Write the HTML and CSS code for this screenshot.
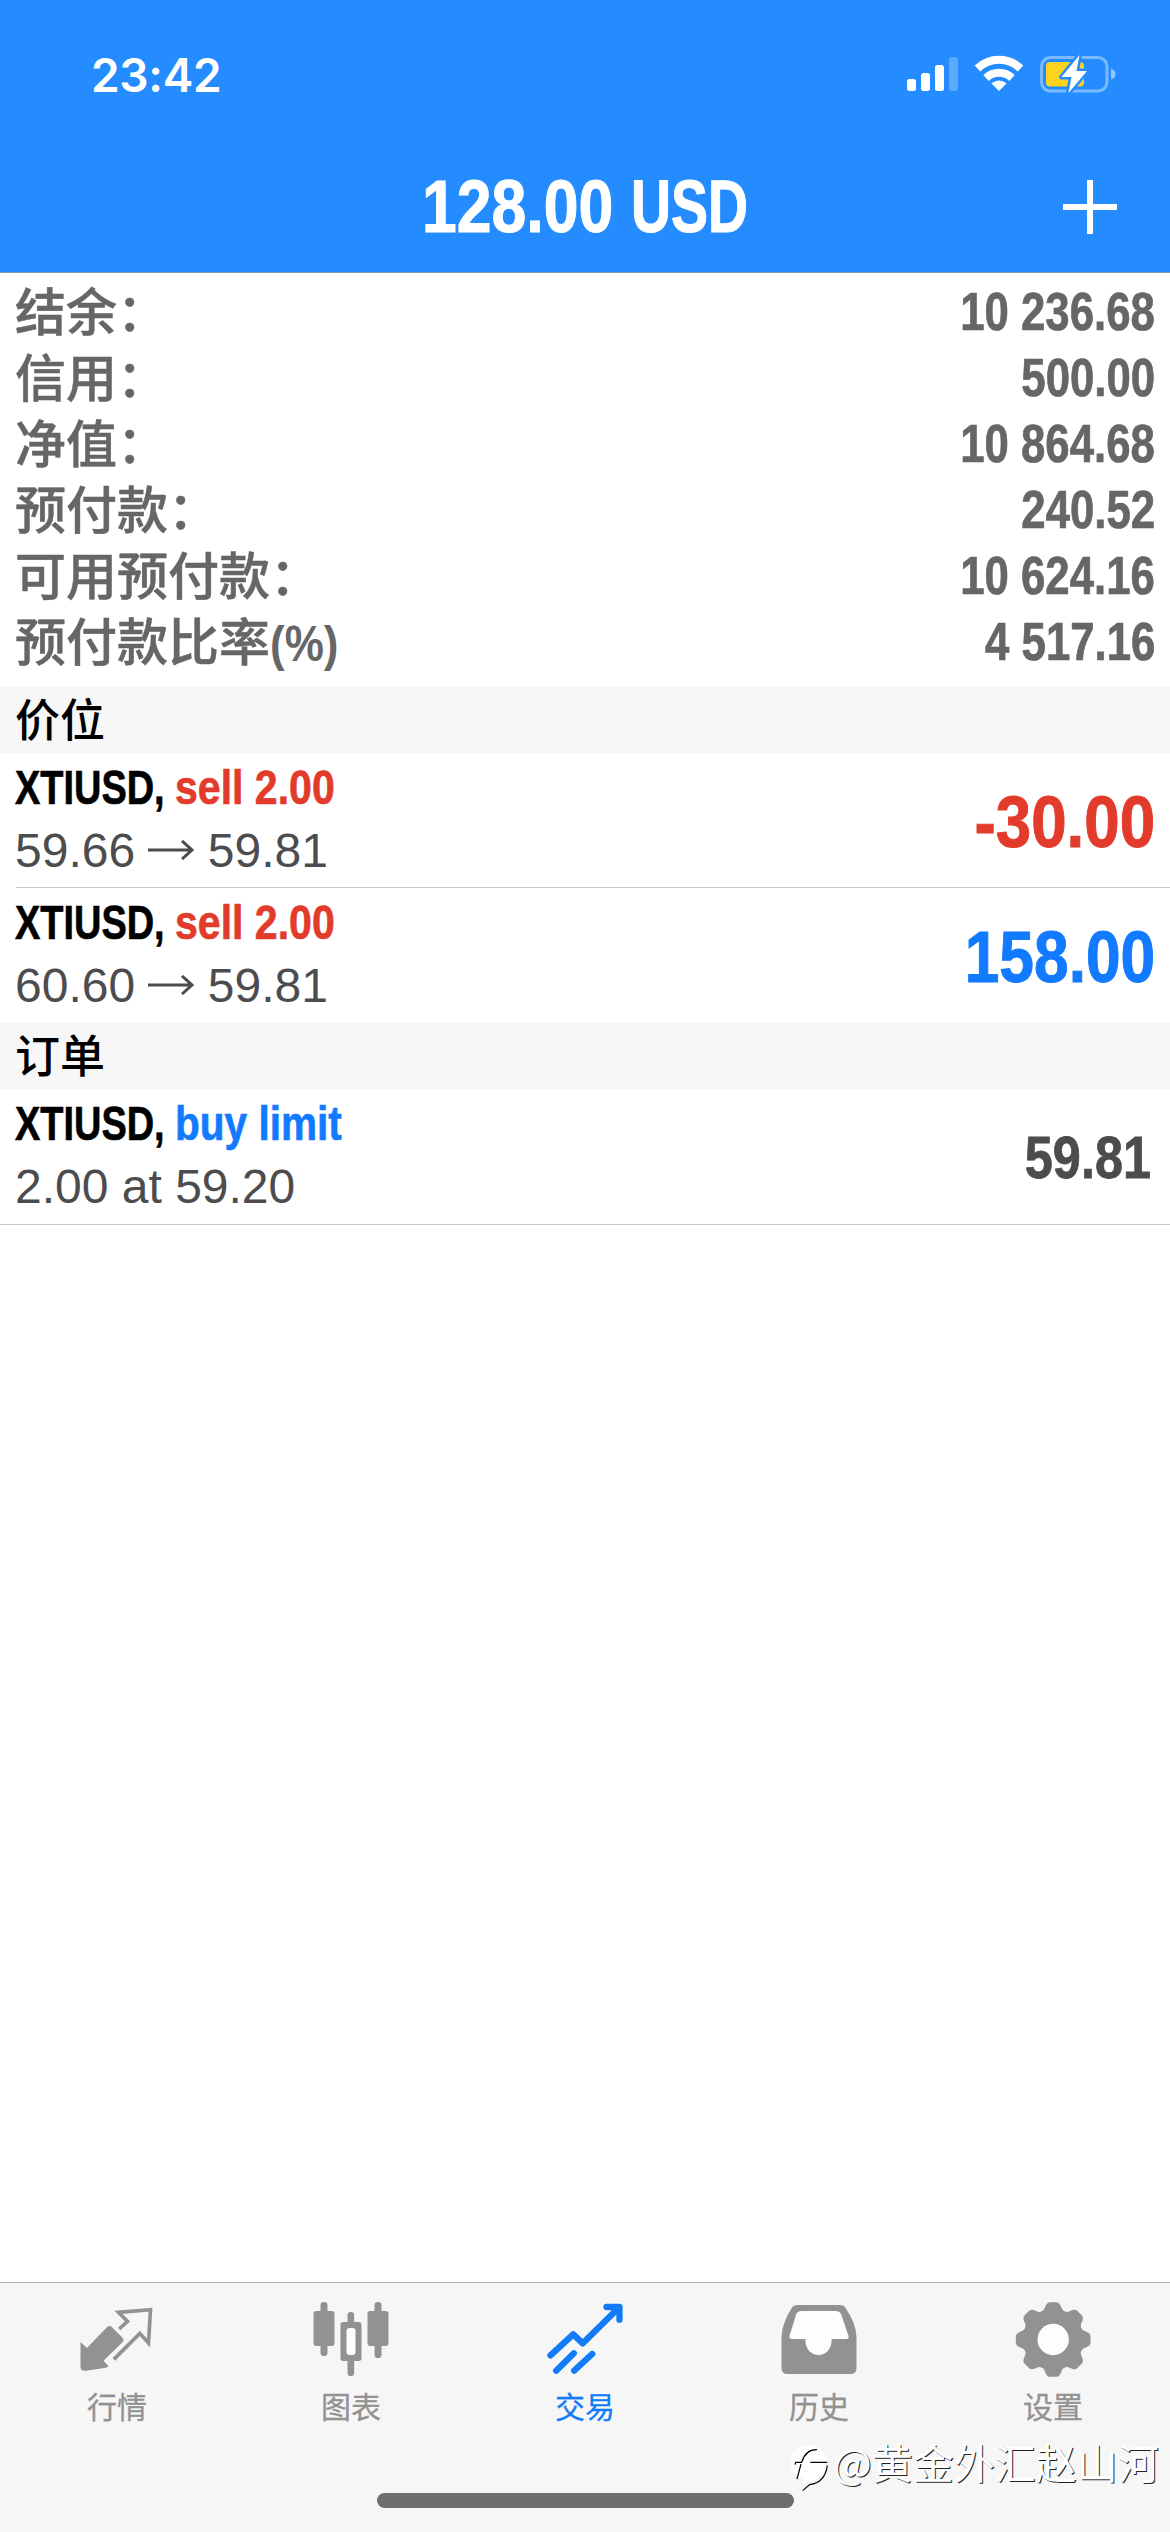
FILE: index.html
```html
<!DOCTYPE html>
<html lang="zh-CN">
<head>
<meta charset="utf-8">
<title>交易</title>
<link rel="stylesheet" href="styles.css">
</head>
<body>
<div class="app">
  <header class="header">
    <div class="status">
      <span class="time">23:42</span>
      <svg class="status-icons" viewBox="0 0 214 48" width="214" height="48">
        <g fill="#fff">
          <rect x="1" y="29" width="9" height="12" rx="2.5"/>
          <rect x="15" y="23" width="9" height="18" rx="2.5"/>
          <rect x="29" y="15" width="9" height="26" rx="2.5"/>
          <rect x="43" y="7" width="9" height="34" rx="2.5" opacity=".25"/>
        </g>
        <g fill="none" stroke="#fff" stroke-width="8">
          <path d="M71.500 18.500A31 31 0 0 1 114.500 18.500"/>
          <path d="M80 28A19 19 0 0 1 106 28"/>
        </g>
        <path fill="#fff" stroke="#fff" stroke-linejoin="round" d="M93 40.500L86 33.500Q93 28.500 100 33.500Z"/>
        <rect x="135.500" y="7.500" width="65.500" height="33.500" rx="9" fill="none" stroke="#fff" stroke-opacity=".4" stroke-width="3"/>
        <path fill="#fff" fill-opacity=".5" d="M205 18.500Q209.500 20 209.500 24Q209.500 28 205 29.500Z"/>
        <rect x="140" y="12" width="38" height="24.500" rx="4" fill="#ffd21e"/>
        <path fill="#fff" stroke="#248cff" stroke-width="5" paint-order="stroke" stroke-linejoin="round" d="M173.500 5L155.500 27H165.500L162.500 43L181 21H170.500Z"/>
      </svg>
    </div>
    <div class="titlebar">
      <h1 class="title"><span class="amount">128.00</span> <span class="currency">USD</span></h1>
      <svg class="plus" viewBox="0 0 54 54" width="54" height="54"><path d="M27 0V54M0 27H54" stroke="#fff" stroke-width="6"/></svg>
    </div>
  </header>
  <dl class="summary">
    <div class="line"><dt>结余：</dt><dd>10 236.68</dd></div>
    <div class="line"><dt>信用：</dt><dd>500.00</dd></div>
    <div class="line"><dt>净值：</dt><dd>10 864.68</dd></div>
    <div class="line"><dt>预付款：</dt><dd>240.52</dd></div>
    <div class="line"><dt>可用预付款：</dt><dd>10 624.16</dd></div>
    <div class="line"><dt>预付款比率<span class="unit">(%)</span></dt><dd>4 517.16</dd></div>
  </dl>
  <h2 class="section">价位</h2>
  <div class="row divided">
    <div class="info">
      <div class="symbol"><span class="name">XTIUSD, </span><span class="side sell">sell 2.00</span></div>
      <div class="prices">59.66 <svg class="arrow" viewBox="0 0 46 20" width="46" height="20"><path d="M0 10H44M34 1L44 10L34 19"/></svg> 59.81</div>
    </div>
    <div class="profit sell">-30.00</div>
  </div>
  <div class="row">
    <div class="info">
      <div class="symbol"><span class="name">XTIUSD, </span><span class="side sell">sell 2.00</span></div>
      <div class="prices">60.60 <svg class="arrow" viewBox="0 0 46 20" width="46" height="20"><path d="M0 10H44M34 1L44 10L34 19"/></svg> 59.81</div>
    </div>
    <div class="profit buy">158.00</div>
  </div>
  <h2 class="section">订单</h2>
  <div class="row last">
    <div class="info">
      <div class="symbol"><span class="name">XTIUSD, </span><span class="side buy">buy limit</span></div>
      <div class="prices">2.00 at 59.20</div>
    </div>
    <div class="price">59.81</div>
  </div>
  <nav class="tabs">
    <div class="tab">
      <svg class="icon" viewBox="238.500 96 225 225">
        <path fill="currentColor" d="M240 216L259 234L320 171Q327 165 334 171L366 203Q372 210 366 217L309 272L324 288Q322 292 316 293L256 302Q240 304 240 290Z"/>
        <path fill="none" stroke="currentColor" stroke-width="11" d="M356 177L381 154L354 127L450 119L444 219L418 190L340 268"/>
      </svg>
      <span>行情</span>
    </div>
    <div class="tab">
      <svg class="icon" viewBox="940.500 96 225 225">
        <g fill="currentColor">
          <rect x="939" y="123" width="63" height="105" rx="8"/><rect x="960" y="96" width="21" height="162" rx="10"/>
          <rect x="1101" y="123" width="63" height="105" rx="8"/><rect x="1122" y="96" width="21" height="168" rx="10"/>
          <rect x="1020" y="156" width="63" height="117" rx="8"/><rect x="1041" y="126" width="20" height="192" rx="10"/>
        </g>
        <rect x="1038" y="174" width="27" height="81" rx="9" fill="#fdfdfd"/>
      </svg>
      <span>图表</span>
    </div>
    <div class="tab active">
      <svg class="icon" viewBox="292.500 96 225 225" fill="none" stroke="currentColor" stroke-width="19" stroke-linecap="round" stroke-linejoin="round">
        <path d="M300 256L368 193L397 220L504 114M468 111H507V149"/>
        <path d="M317 302L370 250M371 302L425 252"/>
      </svg>
      <span>交易</span>
    </div>
    <div class="tab">
      <svg class="icon" viewBox="994.500 96 225 225">
        <path fill="currentColor" d="M1041 105H1168Q1180 105 1186 115Q1216 160 1218 200V294Q1218 312 1200 312H1011Q993 312 993 294V200Q995 160 1023 115Q1029 105 1041 105Z"/>
        <path fill="#fdfdfd" d="M1053 123H1156Q1166 123 1172 133L1194 198Q1196 207 1187 207H1143V214A39 41 0 0 1 1065 214V207H1024Q1015 207 1017 198L1037 133Q1042 123 1053 123Z"/>
      </svg>
      <span>历史</span>
    </div>
    <div class="tab">
      <svg class="icon" viewBox="736.500 96 225 225">
        <g transform="translate(848 208.500)" fill="currentColor">
          <circle r="91"/>
          <path id="tooth" d="M-38 -82Q-27 -86 -24 -98Q-19 -112 -9 -112H9Q19 -112 24 -98Q27 -86 38 -82Z"/>
          <use href="#tooth" transform="rotate(45)"/><use href="#tooth" transform="rotate(90)"/><use href="#tooth" transform="rotate(135)"/>
          <use href="#tooth" transform="rotate(180)"/><use href="#tooth" transform="rotate(225)"/><use href="#tooth" transform="rotate(270)"/><use href="#tooth" transform="rotate(315)"/>
          <circle r="47" fill="#fdfdfd"/>
        </g>
      </svg>
      <span>设置</span>
    </div>
  </nav>
  <div class="home"></div>
  <div class="watermark">
    <svg viewBox="0 0 120 135" width="40" height="45">
      <path fill="#fff" d="M62 4A56 54 0 0 1 116 52Q114 105 55 112L42 124V104Q0 90 4 50Q12 8 62 4Z"/>
      <path fill="none" stroke="#000" stroke-width="3.500" d="M84 17Q50 16 38 55H20L18 62M36 60L24 105M64 55H115M115 64Q108 116 62 122L41 140"/>
    </svg>
    <span>@黄金外汇赵山河</span>
  </div>
</div>
</body>
</html>
```
FILE: styles.css
```css
* { margin: 0; padding: 0; box-sizing: border-box; }
body {
  width: 1170px;
  height: 2532px;
  background: #fff;
  font-family: "Liberation Sans", "Noto Sans CJK SC", sans-serif;
  overflow: hidden;
}
.app { position: relative; display: flex; flex-direction: column; height: 2532px; }

.header { height: 273px; flex: none; background: #248cff; color: #fff; border-bottom: 1px solid #7f9cc0; }
.status { display: flex; justify-content: space-between; height: 141px; padding: 47px 50px 0 91px; }
.time { font: 600 46px/56px Inter, sans-serif; letter-spacing: -0.3px; }
.status-icons { margin-top: 3px; }
.titlebar { display: grid; grid-template-columns: 1fr auto 1fr; align-items: center; height: 131px; padding: 0 53px; }
.plus { justify-self: end; }

/* Condensed bold lettering: the face is narrowed horizontally */
.title, dd, .symbol, .profit, .price, .unit { font-family: "Liberation Sans", sans-serif; font-weight: bold; -webkit-text-stroke: 0.014em currentColor; }
dd, .profit, .price { transform-origin: right center; }

.title { grid-column: 2; display: flex; gap: 17px; font-size: 74px; line-height: 92px; }
.amount, .currency, .unit, .name, .side { display: inline-block; transform-origin: left center; }
.amount { transform: scaleX(0.845); margin-right: -35px; }
.currency { transform: scaleX(0.75); margin-right: -39px; }

.summary { height: 414px; flex: none; padding: 5px 15px 0; color: #666; }
.line { display: flex; justify-content: space-between; height: 66px; }
dt { font: 500 51px/62px "Noto Sans CJK SC", sans-serif; -webkit-text-stroke: 0.5px currentColor; white-space: nowrap; }
dd { font-size: 53px; line-height: 68px; transform: scaleX(0.825); }
.unit { font-size: 50px; transform: scaleX(0.88); -webkit-text-stroke: 0; }

.section { height: 66px; flex: none; padding-left: 15px; background: #f7f7f7; font: 500 45px/62px "Noto Sans CJK SC", sans-serif; color: #000; }

.row { display: flex; justify-content: space-between; height: 135px; flex: none; padding: 0 15px; }
.divided { background: linear-gradient(#c8c8c8, #c8c8c8) 16px 100% / 100% 1px no-repeat; }
.last { height: 136px; border-bottom: 1px solid #c8c8c8; }
.info { padding-top: 4px; }
.symbol { display: flex; font-size: 48px; line-height: 62px; color: #000; white-space: pre; }
.name { transform: scaleX(0.79); margin-right: -43px; }
.side { transform: scaleX(0.855); }
.side.buy { transform: scaleX(0.845); }
.prices { font: 48px/64px "Liberation Sans", sans-serif; color: #4c4c4e; white-space: pre; }
.arrow { fill: none; stroke: #4c4c4e; stroke-width: 3; vertical-align: 7px; }
.sell { color: #e33b2b; }
.buy { color: #117aff; }
.profit { font-size: 72px; line-height: 138px; transform: scaleX(0.865); }
.profit.sell { transform: scaleX(0.885); }
.price { font-size: 60px; line-height: 138px; color: #4c4c4e; padding-right: 5px; transform: scaleX(0.84); }

.tabs { display: flex; height: 250px; margin-top: auto; flex: none; background: #f6f6f6; border-top: 1px solid #b2b2b2; color: #929292; }
.tab { flex: 1; display: flex; flex-direction: column; align-items: center; padding-top: 19px; font: 400 30px/44px "Noto Sans CJK SC", sans-serif; -webkit-text-stroke: 0.3px currentColor; }
.icon { width: 75px; height: 75px; margin-bottom: 6px; overflow: visible; }
.active { color: #137bf8; }
.home { position: absolute; left: 377px; top: 2493px; width: 417px; height: 15px; border-radius: 8px; background: #6e6e6e; }
.watermark { position: absolute; left: 789px; top: 2437px; display: flex; gap: 4px; color: #fff; font: 41px/48px "Noto Sans CJK SC", sans-serif; text-shadow: 1px 1px 0 #222; white-space: nowrap; }
.watermark svg { overflow: visible; margin-top: 7px; }
```
